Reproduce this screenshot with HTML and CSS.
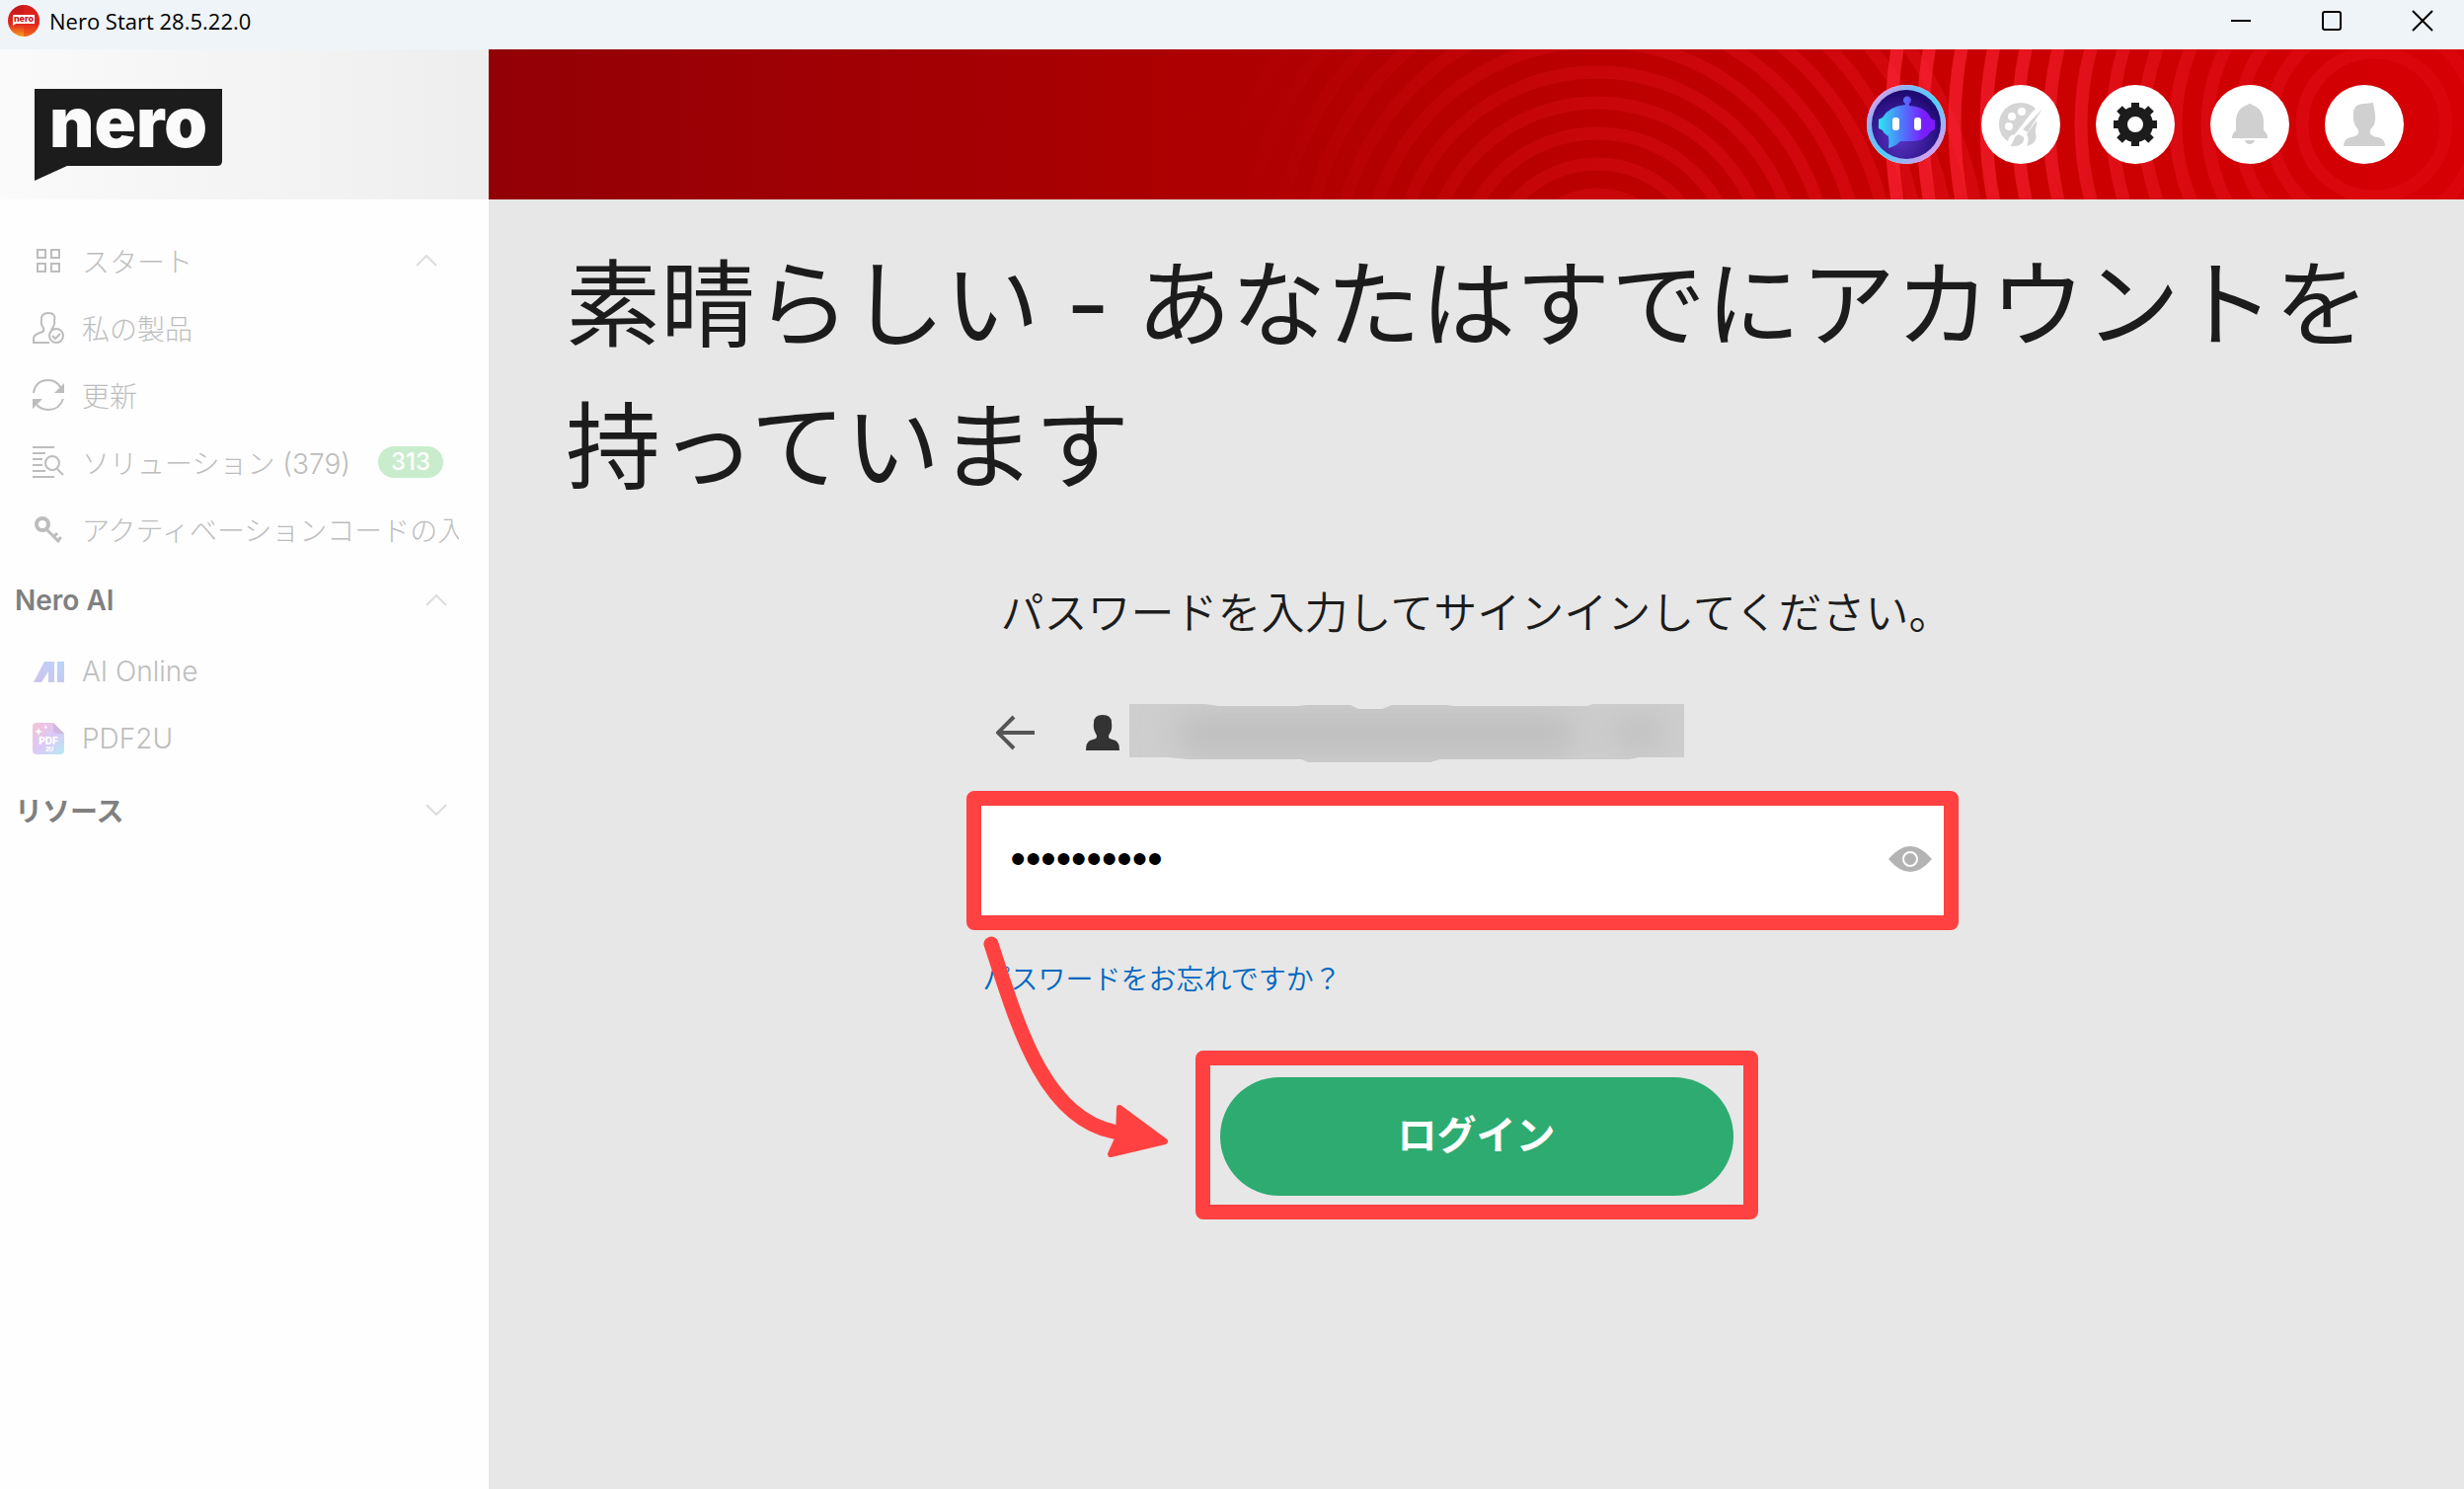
FILE: index.html
```html
<!DOCTYPE html>
<html lang="ja">
<head>
  <meta charset="UTF-8">
  <meta name="viewport" content="width=device-width, initial-scale=1.0">
  <title>Nero Start</title>
  <link rel="stylesheet" href="styles.css">
</head>
<body>
  <!-- タイトルバー -->
  <header class="titlebar">
    <svg class="app-icon" viewBox="0 0 32 32">
      <defs>
        <linearGradient id="app-red" x1="0" y1="0" x2="0" y2="1">
          <stop offset="0" stop-color="#c4161c"/>
          <stop offset="0.6" stop-color="#e0261c"/>
          <stop offset="1" stop-color="#f9a11b"/>
        </linearGradient>
      </defs>
      <circle cx="16" cy="16" r="16" fill="url(#app-red)"/>
      <path d="M16 0a16 16 0 0 1 0 32z" fill="#e8281c" opacity=".45"/>
      <path d="M5 10h22v9H8l-3 2z" fill="#fff"/>
      <text x="16" y="17" text-anchor="middle" class="app-icon-text">nero</text>
    </svg>
    <span class="window-title">Nero Start 28.5.22.0</span>
    <div class="window-buttons">
      <button type="button" aria-label="最小化"><svg viewBox="0 0 20 20"><path d="M0 10h20"/></svg></button>
      <button type="button" aria-label="最大化"><svg viewBox="0 0 20 20"><rect x="1" y="1" width="18" height="18" rx="2"/></svg></button>
      <button type="button" aria-label="閉じる"><svg viewBox="0 0 20 20"><path d="M0 0l20 20M20 0L0 20"/></svg></button>
    </div>
  </header>

  <div class="layout">
    <!-- サイドバー -->
    <aside class="sidebar">
      <div class="brand">
        <svg class="logo" viewBox="0 0 190 93">
          <path d="M0 0h190v73q0 5-5 5H33L0 93z" fill="#1c1c1c"/>
          <text x="95" y="59" text-anchor="middle" class="logo-text">nero</text>
        </svg>
      </div>
      <nav class="menu">
        <a href="#" class="item">
          <svg class="icon" viewBox="0 0 32 32"><path d="M5 5h8v8H5zM19 5h8v8h-8zM5 19h8v8H5zM19 19h8v8h-8z"/></svg>
          <span>スタート</span>
          <svg class="chevron inner" viewBox="0 0 22 12"><path d="M1 11L11 1l10 10"/></svg>
        </a>
        <a href="#" class="item">
          <svg class="icon" viewBox="0 0 32 32"><path d="M17 31H1v-4q0-3 4-5l5-2q2-1 1-4-3-4-2-7-1-8 7-8t6 8q1 3-1 6l-2 3"/><circle cx="24" cy="24" r="7"/><path d="M20 24l3 3 5-5"/></svg>
          <span>私の製品</span>
        </a>
        <a href="#" class="item">
          <svg class="icon" viewBox="0 0 32 32"><path d="M1 14Q3 1 16 1q8 0 13 8M31 20q-4 11-15 11Q7 31 3 24"/><path class="solid" d="M32 4v10H22zM0 30V20h10z"/></svg>
          <span>更新</span>
        </a>
        <a href="#" class="item">
          <svg class="icon" viewBox="0 0 32 32"><path d="M0 1h22M0 7h13M0 13h10M0 19h10M0 25h13M0 31h22M25 23l6 6"/><circle cx="20" cy="17" r="7"/></svg>
          <span>ソリューション (379)</span>
          <span class="badge">313</span>
        </a>
        <a href="#" class="item">
          <svg class="icon" viewBox="0 0 32 32"><circle cx="10" cy="11" r="6" stroke-width="4"/><path d="M14 16l13 13M22 23l3-3M26 27l3-3" stroke-width="3"/></svg>
          <span>アクティベーションコードの入力</span>
        </a>
        <a href="#" class="group">
          <span>Nero AI</span>
          <svg class="chevron" viewBox="0 0 22 12"><path d="M1 11L11 1l10 10"/></svg>
        </a>
        <a href="#" class="item">
          <svg class="icon" viewBox="0 0 32 32">
            <defs>
              <linearGradient id="ai-fill" x1="1" y1="0" x2="0" y2="1">
                <stop offset="0" stop-color="#b9d4fb"/>
                <stop offset="1" stop-color="#d0c2ea"/>
              </linearGradient>
            </defs>
            <path d="M1 27L12 6h10v21h-6V16l-7 11zM25 6h7v21h-7z" fill="url(#ai-fill)" stroke="none"/>
          </svg>
          <span>AI Online</span>
        </a>
        <a href="#" class="item">
          <svg class="icon" viewBox="0 0 32 32">
            <defs>
              <linearGradient id="pdf-fill" x1="0" y1="0" x2="1" y2="1">
                <stop offset="0" stop-color="#f6c3d3"/>
                <stop offset="0.5" stop-color="#dcc8f6"/>
                <stop offset="1" stop-color="#b5eaf4"/>
              </linearGradient>
            </defs>
            <path d="M4 0h17l11 11v17q0 4-4 4H4q-4 0-4-4V4q0-4 4-4z" fill="url(#pdf-fill)" stroke="none"/>
            <path d="M21 0l11 11h-7q-4 0-4-4z" fill="#d0b8e0" stroke="none"/>
            <path d="M6 5l1 3 3 1-3 1-1 3-1-3-3-1 3-1zM13 2l1 2 1 1-2 1-1-2z" fill="#fff" stroke="none"/>
            <text x="16" y="22" text-anchor="middle" class="pdf-text">PDF</text>
            <text x="17" y="29" text-anchor="middle" class="pdf-small">2U</text>
          </svg>
          <span>PDF2U</span>
        </a>
        <a href="#" class="group">
          <span>リソース</span>
          <svg class="chevron" viewBox="0 0 22 12"><path d="M1 1l10 10L21 1"/></svg>
        </a>
      </nav>
    </aside>

    <div class="content">
      <!-- 赤いバナー -->
      <div class="banner">
        <svg class="waves" viewBox="0 0 2001 152" preserveAspectRatio="xMaxYMin slice">
          <defs>
            <linearGradient id="wave-left" gradientUnits="userSpaceOnUse" x1="760" y1="0" x2="1440" y2="0">
              <stop offset="0" stop-color="#f01828" stop-opacity="0"/>
              <stop offset="0.5" stop-color="#f01828" stop-opacity=".25"/>
              <stop offset="1" stop-color="#f01828" stop-opacity=".32"/>
            </linearGradient>
            <linearGradient id="wave-right" gradientUnits="userSpaceOnUse" x1="1400" y1="0" x2="2001" y2="0">
              <stop offset="0" stop-color="#ff2638" stop-opacity=".7"/>
              <stop offset="0.3" stop-color="#ff2638" stop-opacity=".5"/>
              <stop offset="0.55" stop-color="#f52030" stop-opacity=".3"/>
              <stop offset="1" stop-color="#f52030" stop-opacity=".15"/>
            </linearGradient>
          </defs>
          <g fill="none" stroke="url(#wave-left)" stroke-width="13">
            <circle cx="1123" cy="226" r="79"/>
            <circle cx="1123" cy="226" r="110"/>
            <circle cx="1123" cy="226" r="141"/>
            <circle cx="1123" cy="226" r="172"/>
            <circle cx="1123" cy="226" r="203"/>
            <circle cx="1123" cy="226" r="234"/>
            <circle cx="1123" cy="226" r="265"/>
            <circle cx="1123" cy="226" r="296"/>
            <circle cx="1123" cy="226" r="327"/>
            <circle cx="1123" cy="226" r="358"/>
            <circle cx="1123" cy="226" r="389"/>
          </g>
          <g fill="none" stroke="url(#wave-right)" stroke-width="13">
            <circle cx="1910" cy="76" r="73"/>
            <circle cx="1910" cy="76" r="105"/>
            <circle cx="1910" cy="76" r="137"/>
            <circle cx="1910" cy="76" r="169"/>
            <circle cx="1910" cy="76" r="201"/>
            <circle cx="1910" cy="76" r="233"/>
            <circle cx="1910" cy="76" r="265"/>
            <circle cx="1910" cy="76" r="297"/>
            <circle cx="1910" cy="76" r="329"/>
            <circle cx="1910" cy="76" r="361"/>
            <circle cx="1910" cy="76" r="393"/>
            <circle cx="1910" cy="76" r="425"/>
            <circle cx="1910" cy="76" r="457"/>
            <circle cx="1910" cy="76" r="489"/>
          </g>
        </svg>
        <div class="tools">
          <button type="button" class="tool" aria-label="AI アシスタント">
            <svg viewBox="0 0 80 80">
              <defs>
                <linearGradient id="bot-ring" x1="0" y1="0" x2="1" y2="1">
                  <stop offset="0.1" stop-color="#e79be8"/>
                  <stop offset="0.3" stop-color="#7cb8f8"/>
                  <stop offset="0.55" stop-color="#4fd0fb"/>
                  <stop offset="0.85" stop-color="#d79df0"/>
                </linearGradient>
                <radialGradient id="bot-bg" cx=".4" cy=".7" r=".65">
                  <stop offset="0" stop-color="#5a35c8"/>
                  <stop offset="1" stop-color="#200a74"/>
                </radialGradient>
                <linearGradient id="bot-face" x1="0" y1="0" x2="1" y2="0">
                  <stop offset="0" stop-color="#2fe6f0"/>
                  <stop offset="0.4" stop-color="#4d7dfa"/>
                  <stop offset="0.8" stop-color="#7a1cff"/>
                </linearGradient>
              </defs>
              <circle cx="40" cy="40" r="40" fill="url(#bot-ring)"/>
              <circle cx="40" cy="40" r="35" fill="url(#bot-bg)"/>
              <path d="M39 21v-2a4 4 0 1 1 4 0v2q17 1 22 13l4 2v9l-4 2q-6 10-19 10H34q-4 5-12 7 1-6 0-12-5-3-6-6l-4-2v-9l4-2q6-11 23-13z" fill="url(#bot-face)"/>
              <rect x="26" y="33" width="7" height="13" rx="3" fill="#fff"/>
              <rect x="48" y="33" width="7" height="13" rx="3" fill="#fff"/>
            </svg>
          </button>
          <button type="button" class="tool" aria-label="テーマ">
            <svg viewBox="0 0 80 80" fill="#d5d5d5">
              <path d="M40 18c-13 0-22 10-22 22 0 8 4 14 9 17 1-5 3-6 7-7l17-22 4-4c-4-4-9-6-15-6zM56 36L46 50c2 3 2 7 0 12 8-2 11-7 9-13-1-5 2-8 1-13z"/>
              <path d="M62 24L47 48l-5-3z"/>
              <path d="M38 50l5 3c1 6-4 10-14 9 4-3 3-10 9-12z"/>
              <g fill="#fff"><circle cx="41" cy="27" r="4"/><circle cx="31" cy="32" r="4"/><circle cx="28" cy="42" r="4"/></g>
            </svg>
          </button>
          <button type="button" class="tool" aria-label="設定">
            <svg viewBox="0 0 80 80">
              <circle cx="40" cy="40" r="13" fill="none" stroke="#1c1c1c" stroke-width="10"/>
              <g stroke="#1c1c1c" stroke-width="8">
                <path d="M40 24v-6M40 56v6M24 40h-6M56 40h6M29 29l-5-5M51 29l5-5M29 51l-5 5M51 51l5 5"/>
              </g>
            </svg>
          </button>
          <button type="button" class="tool" aria-label="通知">
            <svg viewBox="0 0 80 80" fill="#d0d0d0">
              <path d="M38 20q2-2 4 0 12 4 12 17v9q4 3 4 8H22q0-5 4-8v-9q0-13 12-17zM35 56h10q-1 4-5 4t-5-4z"/>
            </svg>
          </button>
          <button type="button" class="tool" aria-label="アカウント">
            <svg viewBox="0 0 80 80" fill="#d0d0d0">
              <path d="M29 29q0-10 11-10l9-1 2 11q1 10-3 14-3 3-2 6 1 3 8 4 7 2 7 9H19q0-7 7-9 7-1 8-4t-2-6q-4-6-3-14z"/>
            </svg>
          </button>
        </div>
      </div>

      <!-- ログイン -->
      <main class="main">
        <h1>素晴らしい - あなたはすでにアカウントを持っています</h1>
        <form class="login" onsubmit="return false">
          <p class="lead">パスワードを入力してサインインしてください。</p>
          <div class="account">
            <button type="button" class="back" aria-label="戻る">
              <svg viewBox="0 0 40 36"><path d="M39 18H3M18 2L2 18l16 16"/></svg>
            </button>
            <svg class="person" viewBox="0 0 34 36"><path d="M8 8q0-8 9-8t9 8q1 7-2 11-2 3 0 5l6 2q4 2 4 10H0q0-8 4-10l6-2q2-2 0-5-3-5-2-11z"/></svg>
            <svg class="redacted" viewBox="0 0 562 60" preserveAspectRatio="none">
              <defs>
                <filter id="soft" x="-20%" y="-80%" width="140%" height="260%"><feGaussianBlur stdDeviation="18"/></filter>
                <clipPath id="redacted-edge"><path d="M0 1h76l14 2h82l8-1h44l8 4h24l10-4h54l8 1h136l6-2h92v54h-46l-10 2H315l-10 3H182l-8-3H60l-20-2H0z"/></clipPath>
              </defs>
              <g clip-path="url(#redacted-edge)">
                <rect width="562" height="60" fill="#cecece"/>
                <g filter="url(#soft)" fill="#b5b5b5">
                  <rect x="50" y="18" width="400" height="26"/>
                  <rect x="490" y="20" width="50" height="20"/>
                </g>
              </g>
            </svg>
          </div>
          <div class="field marked">
            <label class="hidden-label" for="password">パスワード</label>
            <input type="password" id="password" value="nero123456">
            <button type="button" class="eye" aria-label="パスワードを表示">
              <svg viewBox="0 0 44 26"><path d="M0 13Q11 0 22 0t22 13Q33 26 22 26T0 13z" fill="#b3b3b3"/><circle cx="22" cy="13" r="7" fill="none" stroke="#fff" stroke-width="2"/></svg>
            </button>
          </div>
          <a href="#" class="forgot">パスワードをお忘れですか？</a>
          <div class="submit marked">
            <button type="submit" class="login-btn">ログイン</button>
          </div>
          <svg class="arrow" viewBox="0 0 200 240">
            <path d="M14 17C40 96 66 192 138 207" fill="none" stroke="#ff4141" stroke-width="15" stroke-linecap="round"/>
            <path d="M144 183l46 34-55 13 8-18z" fill="#ff4141" stroke="#ff4141" stroke-width="6" stroke-linejoin="round"/>
          </svg>
        </form>
      </main>
    </div>
  </div>
</body>
</html>
```
FILE: styles.css
```css
* {
  box-sizing: border-box;
}
body {
  display: flex;
  flex-direction: column;
  min-height: 100vh;
  margin: 0;
  font-family: Inter, "Noto Sans CJK JP", sans-serif;
  color: #1c1c1c;
  background-color: #e7e7e7;
}
button {
  padding: 0;
  border: none;
  background: none;
  font-family: inherit;
  cursor: pointer;
}
a {
  text-decoration: none;
}
svg {
  display: block;
  flex-shrink: 0;
}

/* title bar */
.titlebar {
  display: flex;
  align-items: center;
  height: 50px;
  padding: 0 32px 8px 8px;
  background-color: #eff4f8;
}
.app-icon {
  width: 32px;
  height: 32px;
}
.app-icon-text {
  font-size: 9px;
  font-weight: 800;
  fill: #c4161c;
}
.window-title {
  margin-left: 10px;
  font-family: "Open Sans", sans-serif;
  font-size: 22px;
  color: #000;
}
.window-buttons {
  display: flex;
  gap: 72px;
  margin-left: auto;
}
.window-buttons svg {
  width: 20px;
  height: 20px;
  fill: none;
  stroke: #000;
  stroke-width: 2;
  overflow: visible;
}

/* layout */
.layout {
  display: flex;
  flex: 1;
}
.sidebar {
  flex: 0 0 495px;
  min-width: 0;
  background-color: #fefefe;
}
.brand {
  height: 152px;
  padding: 40px 35px;
  background: linear-gradient(to right, #fafafa, #eeeeee);
}
.logo {
  width: 190px;
  height: 93px;
}
.logo-text {
  font-size: 70px;
  font-weight: 900;
  fill: #fafafa;
}
.menu {
  padding-top: 28px;
}
.item,
.group {
  display: flex;
  align-items: center;
  margin-right: 30px;
  overflow: hidden;
  white-space: nowrap;
  font-size: 28px;
}
.item {
  height: 68px;
  padding-left: 33px;
  font-weight: 300;
  color: #bdbdbd;
}
.group {
  height: 76px;
  padding-left: 15px;
  font-weight: 600;
  color: #808080;
}
.icon {
  width: 32px;
  height: 32px;
  margin-right: 18px;
  fill: none;
  stroke: #bdbdbd;
  stroke-width: 2;
}
.icon .solid {
  fill: #bdbdbd;
  stroke: none;
}
.pdf-text,
.pdf-small {
  fill: #fff;
  stroke: none;
  font-weight: 800;
}
.pdf-text {
  font-size: 10px;
}
.pdf-small {
  font-size: 6px;
}
.chevron {
  width: 22px;
  height: 12px;
  margin-left: auto;
  margin-right: 12px;
  fill: none;
  stroke: #dcdcdc;
  stroke-width: 2;
}
.chevron.inner {
  margin-right: 22px;
}
.badge {
  margin-left: 28px;
  padding: 0 13px;
  border-radius: 16px;
  font-size: 24px;
  font-weight: 500;
  line-height: 32px;
  color: #fff;
  background-color: #c9eccd;
}

/* banner */
.content {
  flex: 1;
  min-width: 0;
}
.banner {
  display: grid;
  height: 152px;
  background: linear-gradient(to right, #920006, #b60000 48%, #c80000 75%, #d60004);
}
.waves,
.tools {
  grid-area: 1 / 1;
}
.waves {
  width: 100%;
  height: 152px;
}
.tools {
  display: flex;
  align-items: center;
  justify-content: flex-end;
  gap: 36px;
  padding-right: 61px;
}
.tool {
  width: 80px;
  height: 80px;
  border-radius: 50%;
  background-color: #fff;
}

/* login */
.main {
  padding: 34px 78px;
}
h1 {
  margin: 0;
  font-size: 96px;
  font-weight: 400;
  line-height: 144px;
}
.login {
  position: relative;
  max-width: 1004px;
  margin: 64px auto 0;
}
.lead {
  margin: 0;
  font-size: 44px;
  font-weight: 350;
  line-height: 66px;
  text-align: center;
}
.account {
  display: flex;
  align-items: center;
  height: 60px;
  margin-top: 58px;
  padding-left: 15px;
}
.back svg {
  width: 40px;
  height: 36px;
  fill: none;
  stroke: #555;
  stroke-width: 4;
}
.person {
  width: 34px;
  height: 36px;
  margin: 0 10px 0 51px;
  fill: #333;
}
.redacted {
  width: 562px;
  height: 60px;
}
.field {
  display: flex;
  align-items: center;
  height: 111px;
  margin: 44px 29px 0 0;
  padding-bottom: 4px;
  background-color: #fff;
}
.field input {
  flex: 1;
  min-width: 0;
  height: 100%;
  padding: 0 30px;
  border: none;
  outline: none;
  font-family: "Liberation Sans", sans-serif;
  font-size: 44px;
  color: #000;
  background: none;
}
.eye {
  margin-right: 12px;
}
.eye svg {
  width: 44px;
  height: 26px;
}
.hidden-label {
  position: absolute;
  width: 1px;
  height: 1px;
  overflow: hidden;
  clip-path: inset(50%);
}
.forgot {
  display: block;
  width: fit-content;
  margin: 43px 0 0 2px;
  font-size: 28px;
  font-weight: 350;
  line-height: 44px;
  color: #0067c0;
}
.submit {
  width: 540px;
  margin: 65px auto 0;
  padding: 12px 10px 9px;
}
.login-btn {
  width: 100%;
  height: 120px;
  padding-bottom: 8px;
  border-radius: 60px;
  font-size: 40px;
  font-weight: 700;
  color: #fff;
  background-color: #2eab70;
}

/* red frames and arrow over the form */
.marked {
  position: relative;
}
.marked::after {
  content: "";
  position: absolute;
  inset: -15px;
  border: 15px solid #ff4141;
  border-radius: 8px;
  pointer-events: none;
}
.arrow {
  position: absolute;
  top: 351px;
  left: -4px;
  width: 200px;
  height: 240px;
  pointer-events: none;
}
```
